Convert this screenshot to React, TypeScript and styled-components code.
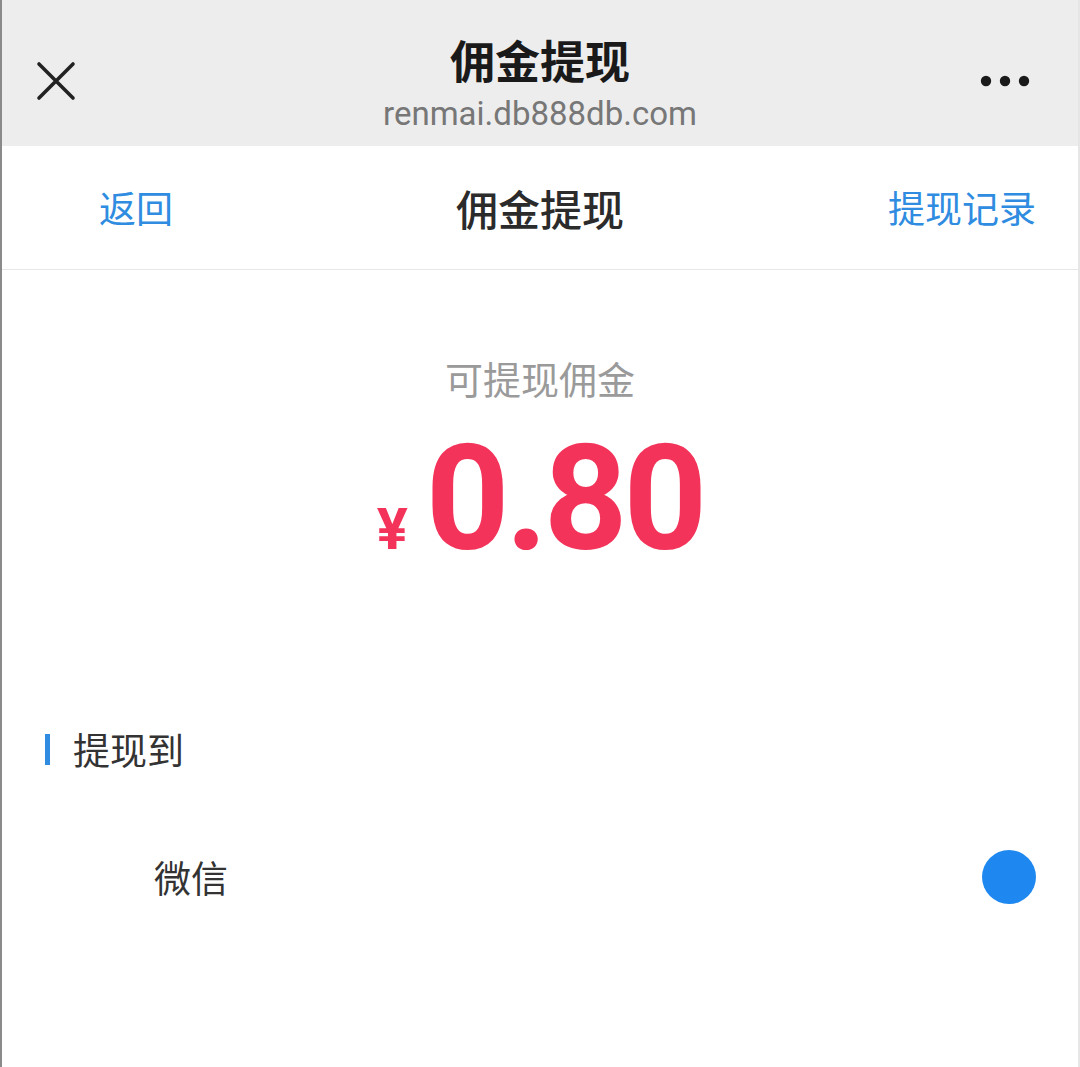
import React from 'react'
import styled, { createGlobalStyle } from 'styled-components'

const GlobalStyle = createGlobalStyle`
    html, body {
        margin: 0;
        padding: 0;
        background: #fff;
    }
    body {
        font-family: 'Noto Sans CJK SC', 'Noto Sans', sans-serif;
    }
`

const Page = styled.div`
    width: 1080px;
    height: 1067px;
    box-sizing: border-box;
    border-left: 2px solid #8a8a8a;
    border-right: 2px solid #e6e6e6;
    overflow: hidden;
    background: #fff;
`

const BrowserBar = styled.div`
    height: 146px;
    background: #ededed;
    display: grid;
    grid-template-columns: 120px 1fr 120px;
    align-items: center;
`

const IconButton = styled.div<{ $align: 'left' | 'right' }>`
    display: flex;
    justify-content: ${(p) => (p.$align === 'left' ? 'flex-start' : 'flex-end')};
    padding: ${(p) => (p.$align === 'left' ? '0 0 0 34px' : '0 48px 0 0')};
    margin-top: 16px;
`

const BrowserTitle = styled.div`
    display: flex;
    flex-direction: column;
    align-items: center;
    padding-top: 17px;
    .title {
        font-size: 45px;
        font-weight: 700;
        color: #1a1a1a;
        line-height: 60px;
    }
    .url {
        font-family: Roboto, 'Noto Sans', sans-serif;
        font-size: 33px;
        color: #777;
        line-height: 40px;
        margin-top: 4px;
    }
`

const NavBar = styled.div`
    height: 123px;
    border-bottom: 1px solid #e8e8e8;
    display: flex;
    align-items: center;
    justify-content: space-between;
    padding: 0 42px 0 97px;
    position: relative;
`

const NavLink = styled.div`
    font-size: 37px;
    color: #2f8ce0;
    line-height: 1;
`

const NavTitle = styled.div`
    position: absolute;
    left: 0;
    right: 0;
    text-align: center;
    font-size: 42px;
    font-weight: 500;
    color: #2b2b2b;
    pointer-events: none;
`

const Balance = styled.div`
    display: flex;
    flex-direction: column;
    align-items: center;
    padding-top: 80px;
    .label {
        font-size: 38px;
        color: #9a9a9a;
        line-height: 56px;
    }
`

const Amount = styled.div`
    display: flex;
    align-items: baseline;
    color: #f4335a;
    font-family: Roboto, 'Noto Sans', sans-serif;
    font-weight: 700;
    margin-top: 24px;
    margin-left: 0;
    .currency {
        font-size: 58px;
        margin-right: 18px;
    }
    .value {
        font-size: 146px;
        line-height: 140px;
        letter-spacing: -4px;
    }
`

const Section = styled.div`
    margin-top: 154px;
    padding-left: 43px;
`

const SectionTitle = styled.div`
    display: flex;
    align-items: center;
    gap: 23px;
    font-size: 37px;
    color: #333;
    line-height: 50px;
    &::before {
        content: '';
        width: 5px;
        height: 31px;
        background: #2f8ce0;
    }
`

const OptionRow = styled.div`
    display: flex;
    align-items: center;
    justify-content: space-between;
    margin-top: 76px;
    padding: 0 42px 0 152px;
    font-size: 37px;
    color: #333;
`

const Radio = styled.div<{ $checked: boolean }>`
    width: 54px;
    height: 54px;
    border-radius: 50%;
    background: ${(p) => (p.$checked ? '#1e88f0' : '#fff')};
    border: ${(p) => (p.$checked ? 'none' : '2px solid #ccc')};
`

function App() {
    return (
        <>
            <GlobalStyle />
            <Page>
                <BrowserBar>
                    <IconButton $align="left">
                        <svg width="40" height="40" viewBox="0 0 40 40">
                            <path d="M3 3 L37 37 M37 3 L3 37" stroke="#222" strokeWidth="3.6" strokeLinecap="round" />
                        </svg>
                    </IconButton>
                    <BrowserTitle>
                        <div className="title">佣金提现</div>
                        <div className="url">renmai.db888db.com</div>
                    </BrowserTitle>
                    <IconButton $align="right">
                        <svg width="50" height="12" viewBox="0 0 50 12">
                            <circle cx="6" cy="6" r="5.2" fill="#1a1a1a" />
                            <circle cx="25" cy="6" r="5.2" fill="#1a1a1a" />
                            <circle cx="44" cy="6" r="5.2" fill="#1a1a1a" />
                        </svg>
                    </IconButton>
                </BrowserBar>
                <NavBar>
                    <NavLink>返回</NavLink>
                    <NavTitle>佣金提现</NavTitle>
                    <NavLink>提现记录</NavLink>
                </NavBar>
                <Balance>
                    <div className="label">可提现佣金</div>
                    <Amount>
                        <span className="currency">¥</span>
                        <span className="value">0.80</span>
                    </Amount>
                </Balance>
                <Section>
                    <SectionTitle>提现到</SectionTitle>
                </Section>
                <OptionRow>
                    <span>微信</span>
                    <Radio $checked />
                </OptionRow>
            </Page>
        </>
    )
}

export default App
